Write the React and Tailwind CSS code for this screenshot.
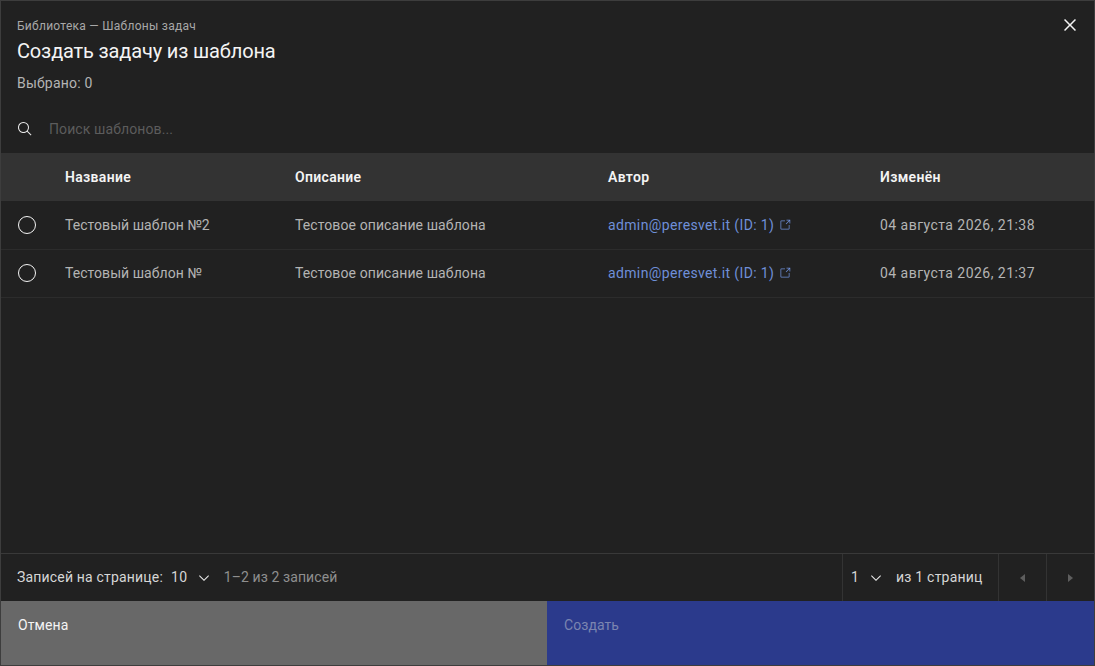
const rows = [
  { name: "Тестовый шаблон №2", date: "04 августа 2026, 21:38" },
  { name: "Тестовый шаблон №", date: "04 августа 2026, 21:37" },
];

const COLS = "grid grid-cols-[64px_230px_313px_272px_1fr] items-center";

const Chevron = ({ className }) => (
  <svg viewBox="0 0 32 32" fill="currentColor" className={`size-[16px] shrink-0 text-[#e8e8e8] ${className}`}>
    <path d="M16 22L6 12l1.4-1.4 8.6 8.6 8.6-8.6L26 12z" />
  </svg>
);

const App = () => {
  return (
    <div className="flex h-screen w-full flex-col overflow-hidden border border-[#3d3d3d] bg-[#212121] font-['Roboto',sans-serif] text-[14px] tracking-[0.1px] text-[#b4b4b4]">
      <header className="relative h-[152px] shrink-0 pt-[16px] pl-[16px]">
        <p className="text-[12px] leading-[18px] tracking-[0.27px] text-[#a8a8a8]">Библиотека — Шаблоны задач</p>
        <h1 className="mt-[2px] text-[20px] leading-[28px] tracking-[-0.15px] text-[#f4f4f4]">Создать задачу из шаблона</h1>
        <p className="mt-[8px] leading-[20px] tracking-[0.2px]">Выбрано: 0</p>
        <div className="mt-[20px] flex h-[32px] items-center gap-[16px]">
          <svg viewBox="0 0 32 32" fill="currentColor" className="size-[16px] text-[#e8e8e8]">
            <path d="M29 27.5859l-7.5521-7.5521a11.0177 11.0177 0 10-1.4141 1.4141L27.5859 29ZM4 13a9 9 0 119 9A9.01 9.01 0 014 13Z" />
          </svg>
          <span className="text-[#5c5c5c]">Поиск шаблонов...</span>
        </div>
        <button className="absolute top-[12px] right-[12px] text-[#f4f4f4]">
          <svg viewBox="0 0 32 32" fill="currentColor" className="size-[24px]">
            <path d="M17.4141 16L24 9.4141 22.5859 8 16 14.5859 9.4143 8 8 9.4141 14.5859 16 8 22.5859 9.4143 24 16 17.4141 22.5859 24 24 22.5859 17.4141 16z" />
          </svg>
        </button>
      </header>

      <div className={`${COLS} h-[48px] shrink-0 bg-[#333333] font-semibold tracking-[0.32px] text-[#f4f4f4]`}>
        <span />
        <span>Название</span>
        <span>Описание</span>
        <span>Автор</span>
        <span>Изменён</span>
      </div>

      {rows.map((row, i) => (
        <div
          key={row.date}
          className={`${COLS} h-[48px] shrink-0 border-t pb-px ${i === 0 ? "border-transparent" : "border-[#2c2c2c]"}`}
        >
          <span className="ml-[17px] size-[18px] rounded-full border border-[#f4f4f4]" />
          <span className="tracking-[0.05px]">{row.name}</span>
          <span>Тестовое описание шаблона</span>
          <span className="flex items-center gap-[5px] tracking-[0.36px] text-[#6f8fd8]">
            admin@peresvet.it (ID: 1)
            <svg viewBox="0 0 32 32" fill="currentColor" className="size-[12px]">
              <path d="M26,28H6a2.0027,2.0027,0,0,1-2-2V6A2.0027,2.0027,0,0,1,6,4H16V6H6V26H26V16h2V26A2.0027,2.0027,0,0,1,26,28Z" />
              <polygon points="20 2 20 4 26.586 4 18 12.586 19.414 14 28 5.414 28 12 30 12 30 2 20 2" />
            </svg>
          </span>
          <span className="tracking-[0.46px]">{row.date}</span>
        </div>
      ))}

      <div className="flex-1 border-t border-[#2c2c2c]" />

      <footer className="flex h-[48px] shrink-0 items-center border-t border-[#393939]">
        <span className="ml-[16px] tracking-[0.18px] text-[#d6d6d6]">Записей на странице:</span>
        <span className="ml-[8px] tracking-[0.5px] text-[#d6d6d6]">10</span>
        <Chevron className="ml-[8px]" />
        <span className="ml-[12px] tracking-[0.1px] text-[#8f8f8f]">1–2 из 2 записей</span>
        <div className="ml-auto flex h-full items-center border-l border-[#333333] pl-[8px]">
          <span className="w-[8px] text-[#d6d6d6]">1</span>
          <Chevron className="ml-[9px]" />
          <span className="ml-[12px] w-[102px] tracking-[0.22px] text-[#d6d6d6]">из 1 страниц</span>
          <div className="flex h-full w-[48px] items-center justify-center border-l border-[#333333]">
            <span className="h-0 w-0 border-y-[4px] border-r-[5px] border-y-transparent border-r-[#5e5e5e]" />
          </div>
          <div className="flex h-full w-[48px] items-center justify-center border-l border-[#333333]">
            <span className="h-0 w-0 border-y-[4px] border-l-[5px] border-y-transparent border-l-[#5e5e5e]" />
          </div>
        </div>
      </footer>

      <div className="grid h-[64px] shrink-0 grid-cols-[546px_1fr]">
        <button className="flex items-start bg-[#686868] pt-[15px] pl-[17px] leading-[18px] tracking-[0.08px] text-[#f4f4f4]">Отмена</button>
        <button className="flex items-start bg-[#2b3a8c] pt-[15px] pl-[17px] leading-[18px] tracking-[0.08px] text-[#7b85b0]">Создать</button>
      </div>
    </div>
  );
};

export default App;
